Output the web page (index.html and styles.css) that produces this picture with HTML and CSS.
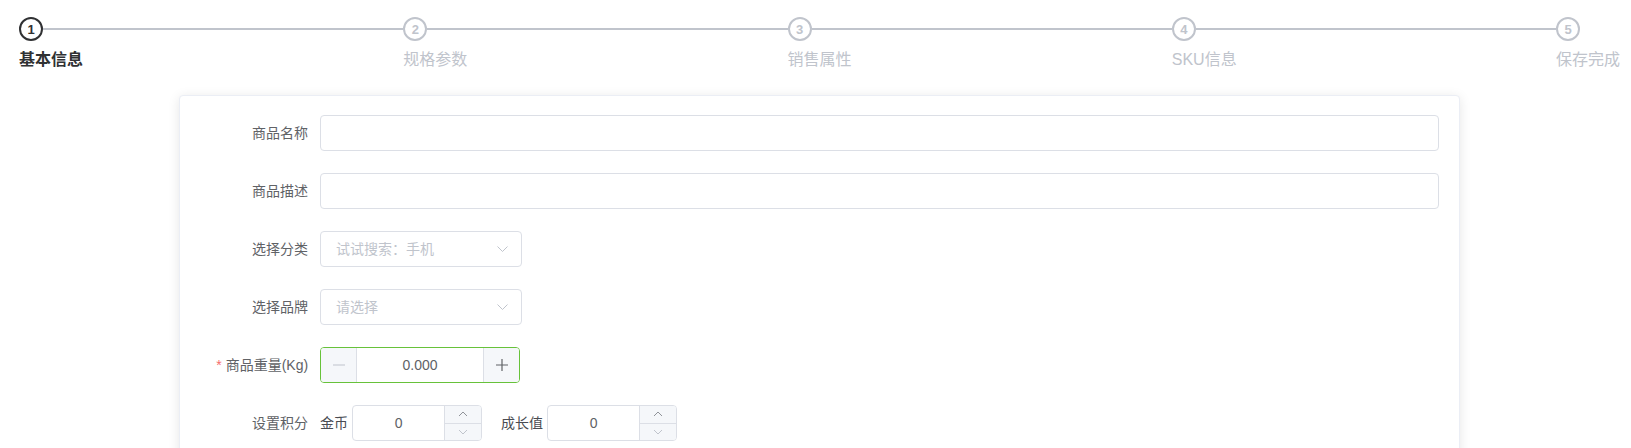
FILE: index.html
```html
<!DOCTYPE html>
<html lang="zh-CN">
<head>
<meta charset="utf-8">
<title>添加商品</title>
<link rel="stylesheet" href="styles.css">
</head>
<body>
<div class="page">
  <div class="steps">
    <div class="step is-process">
      <div class="step-head"><div class="step-icon">1</div><div class="step-line"></div></div>
      <div class="step-title">基本信息</div>
    </div>
    <div class="step">
      <div class="step-head"><div class="step-icon">2</div><div class="step-line"></div></div>
      <div class="step-title">规格参数</div>
    </div>
    <div class="step">
      <div class="step-head"><div class="step-icon">3</div><div class="step-line"></div></div>
      <div class="step-title">销售属性</div>
    </div>
    <div class="step">
      <div class="step-head"><div class="step-icon">4</div><div class="step-line"></div></div>
      <div class="step-title">SKU信息</div>
    </div>
    <div class="step is-last">
      <div class="step-head"><div class="step-icon">5</div></div>
      <div class="step-title">保存完成</div>
    </div>
  </div>

  <div class="card">
    <div class="form-item">
      <label class="form-label">商品名称</label>
      <div class="form-content"><div class="input"></div></div>
    </div>
    <div class="form-item">
      <label class="form-label">商品描述</label>
      <div class="form-content"><div class="input"></div></div>
    </div>
    <div class="form-item">
      <label class="form-label">选择分类</label>
      <div class="form-content">
        <div class="select">
          <span class="placeholder">试试搜索：手机</span>
          <svg class="caret" width="11" height="6" viewBox="0 0 11 6"><path d="M0.5 0.5 L5.5 5.5 L10.5 0.5" fill="none" stroke="#c0c4cc" stroke-width="1"/></svg>
        </div>
      </div>
    </div>
    <div class="form-item">
      <label class="form-label">选择品牌</label>
      <div class="form-content">
        <div class="select">
          <span class="placeholder">请选择</span>
          <svg class="caret" width="11" height="6" viewBox="0 0 11 6"><path d="M0.5 0.5 L5.5 5.5 L10.5 0.5" fill="none" stroke="#c0c4cc" stroke-width="1"/></svg>
        </div>
      </div>
    </div>
    <div class="form-item">
      <label class="form-label"><span class="required">*</span> 商品重量(Kg)</label>
      <div class="form-content">
        <div class="num-input is-success">
          <span class="num-btn minus is-disabled"><svg width="14" height="14" viewBox="0 0 14 14"><path d="M1 7 H13" stroke="#c0c4cc" stroke-width="1.2"/></svg></span>
          <span class="num-value">0.000</span>
          <span class="num-btn plus"><svg width="14" height="14" viewBox="0 0 14 14"><path d="M1 7 H13 M7 1 V13" stroke="#606266" stroke-width="1.2"/></svg></span>
        </div>
      </div>
    </div>
    <div class="form-item">
      <label class="form-label">设置积分</label>
      <div class="form-content inline-group">
        <span class="sub-label">金币</span>
        <div class="num-input-right">
          <span class="num-value">0</span>
          <span class="num-controls">
            <span class="ctl up"><svg width="10" height="6" viewBox="0 0 10 6"><path d="M1 5 L5 1 L9 5" fill="none" stroke="#909399" stroke-width="1"/></svg></span>
            <span class="ctl down"><svg width="10" height="6" viewBox="0 0 10 6"><path d="M1 1 L5 5 L9 1" fill="none" stroke="#c0c4cc" stroke-width="1"/></svg></span>
          </span>
        </div>
        <span class="sub-label second">成长值</span>
        <div class="num-input-right">
          <span class="num-value">0</span>
          <span class="num-controls">
            <span class="ctl up"><svg width="10" height="6" viewBox="0 0 10 6"><path d="M1 5 L5 1 L9 5" fill="none" stroke="#909399" stroke-width="1"/></svg></span>
            <span class="ctl down"><svg width="10" height="6" viewBox="0 0 10 6"><path d="M1 1 L5 5 L9 1" fill="none" stroke="#c0c4cc" stroke-width="1"/></svg></span>
          </span>
        </div>
      </div>
    </div>
  </div>
</div>
</body>
</html>
```
FILE: styles.css
```css
* { box-sizing: border-box; }

body {
  margin: 0;
  background: #fff;
  font-family: "Liberation Sans", "Noto Sans CJK SC", sans-serif;
  color: #606266;
}

.page {
  padding: 0 11px 0 19px;
}

/* steps */
.steps {
  display: flex;
  padding-top: 17px;
}

.step {
  flex: 0 1 25%;
  min-width: 0;
}

.step.is-last {
  flex: 0 0 auto;
}

.step-head {
  display: flex;
  align-items: center;
  height: 24px;
}

.step-icon {
  width: 24px;
  height: 24px;
  flex: 0 0 24px;
  border: 2px solid #c0c4cc;
  border-radius: 50%;
  color: #c0c4cc;
  font-size: 13px;
  font-weight: 700;
  display: flex;
  align-items: center;
  justify-content: center;
  line-height: 1;
}

.step-line {
  flex: 1;
  height: 2px;
  background: #c0c4cc;
}

.step-title {
  font-size: 16px;
  line-height: 38px;
  color: #c0c4cc;
  white-space: nowrap;
}

.step.is-process .step-icon {
  border-color: #303133;
  color: #303133;
}

.step.is-process .step-title {
  color: #303133;
  font-weight: 700;
}

/* card */
.card {
  width: 80%;
  margin: 16px auto 0;
  border: 1px solid #ebeef5;
  border-radius: 4px;
  box-shadow: 0 2px 12px 0 rgba(0, 0, 0, 0.1);
  padding: 19px 20px 20px;
  background: #fff;
}

.form-item {
  display: flex;
  margin-bottom: 22px;
}

.form-label {
  width: 120px;
  flex: 0 0 120px;
  text-align: right;
  padding-right: 12px;
  font-size: 14px;
  line-height: 36px;
  color: #606266;
}

.required {
  color: #f56c6c;
}

.form-content {
  flex: 1;
  min-width: 0;
  line-height: 36px;
  font-size: 14px;
}

.input {
  width: 100%;
  height: 36px;
  border: 1px solid #dcdfe6;
  border-radius: 4px;
}

.select {
  width: 202px;
  height: 36px;
  border: 1px solid #dcdfe6;
  border-radius: 4px;
  display: flex;
  align-items: center;
  justify-content: space-between;
  padding: 0 13px 0 15px;
}

.placeholder {
  color: #c0c4cc;
  font-size: 14px;
}

.caret {
  display: block;
}

/* number input */
.num-input {
  width: 200px;
  height: 36px;
  border: 1px solid #dcdfe6;
  border-radius: 4px;
  display: flex;
  overflow: hidden;
}

.num-input.is-success {
  border-color: #67c23a;
}

.num-btn {
  width: 36px;
  flex: 0 0 36px;
  background: #f5f7fa;
  display: flex;
  align-items: center;
  justify-content: center;
}

.num-btn.minus { border-right: 1px solid #dcdfe6; }
.num-btn.plus { border-left: 1px solid #dcdfe6; }

.num-btn svg { display: block; }

.num-value {
  flex: 1;
  text-align: center;
  font-size: 14px;
  color: #606266;
  line-height: 34px;
}

.inline-group {
  display: flex;
  align-items: center;
}

.sub-label {
  color: #4a4c52;
  font-size: 14px;
  margin-right: 4px;
}

.sub-label.second {
  margin-left: 19px;
}

.num-input-right {
  width: 130px;
  height: 36px;
  border: 1px solid #dcdfe6;
  border-radius: 4px;
  display: flex;
  overflow: hidden;
}

.num-controls {
  width: 37px;
  flex: 0 0 37px;
  border-left: 1px solid #dcdfe6;
  display: flex;
  flex-direction: column;
}

.ctl {
  flex: 1;
  background: #f5f7fa;
  display: flex;
  align-items: center;
  justify-content: center;
}

.ctl.up { border-bottom: 1px solid #dcdfe6; }
.ctl.down { }
.ctl svg { display: block; }
```
